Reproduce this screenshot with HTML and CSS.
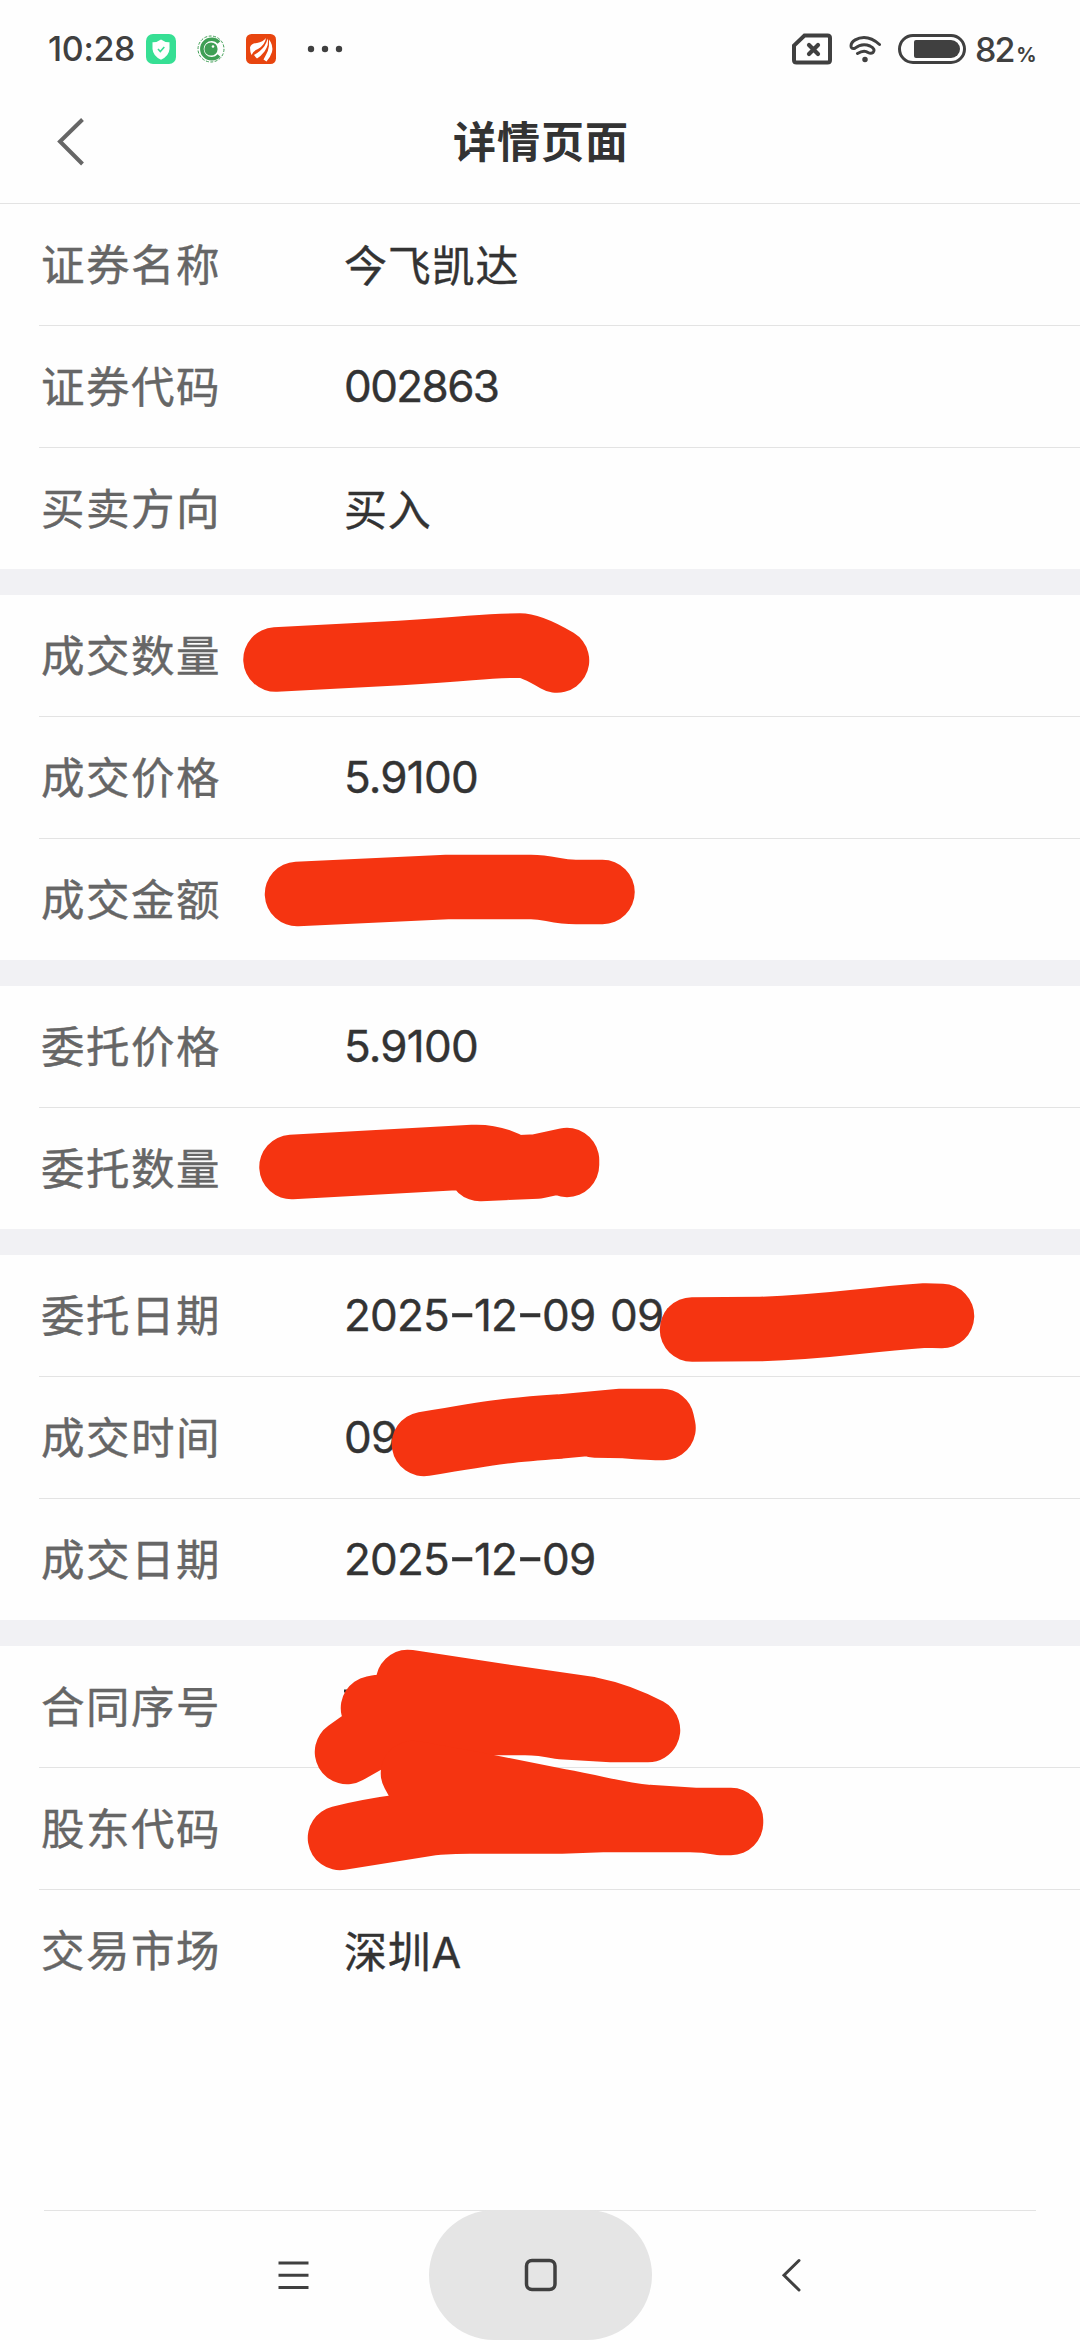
FILE: index.html
```html
<!DOCTYPE html>
<html lang="zh-CN">
<head>
<meta charset="utf-8">
<title>详情页面</title>
<link rel="stylesheet" href="styles.css">
</head>
<body>
<div class="screen">
  <header class="status">
    <span class="clock">10:28</span>
    <svg class="app shield" viewBox="0 0 30 30"><rect width="30" height="30" rx="7" fill="#36df94"/><path d="M15 5.500Q19 8.500 23.500 8.300V15Q23 22 15 25.700Q7 22 6.500 15V8.300Q11 8.500 15 5.500Z" fill="#fff"/><path d="M12 15l2.300 2.500 4-4.500" fill="none" stroke="#36df94" stroke-width="1.600"/></svg>
    <svg class="app ring" viewBox="0 0 28 28"><circle cx="14" cy="14" r="13" fill="none" stroke="#3f9f55" stroke-width="1" stroke-dasharray="3 1.500"/><path d="M22 7.500A9.800 9.800 0 1 0 22 20.500" fill="none" stroke="#3f9f55" stroke-width="3.600"/><circle cx="14" cy="14" r="6.600" fill="#3f9f55"/><circle cx="16" cy="11.500" r="1.300" fill="#fff"/></svg>
    <svg class="app wing" viewBox="0 0 30 30"><rect width="30" height="30" rx="5.500" fill="#e8450f"/><g fill="#fff"><path d="M4 13.500Q5 9.500 11 9Q17 8 20 4Q19 11 12 15Q7 17 5.500 21Q4 18 4 13.500Z"/><path d="M8 21Q15 17 18.500 12Q21 8 21.500 4.500Q23.500 10 18.500 17.500Q15 22 11 24.500Q9.500 23 8 21Z"/><path d="M17.500 25.500Q20 21 21.800 17Q23.500 12 23 5.500Q27.500 11 26 18Q24 24 20.500 27.500Z"/></g></svg>
    <svg class="more" viewBox="0 0 36 8" fill="#404040"><circle cx="4" cy="4" r="3.200"/><circle cx="18" cy="4" r="3.200"/><circle cx="32" cy="4" r="3.200"/></svg>
    <span class="spacer"></span>
    <svg class="sim" viewBox="0 0 40 32" fill="none" stroke="#404040"><path d="M12.500 2.500H35.500Q38 2.500 38 5V27Q38 29.500 35.500 29.500H4.500Q2 29.500 2 27V12.500Z" stroke-width="4"/><path d="M17 12l9 9m0-9l-9 9" stroke-width="4.200" stroke-linecap="round"/></svg>
    <svg class="wifi" viewBox="0 0 32 28" fill="none" stroke="#404040" stroke-width="3" stroke-linecap="round"><path d="M30.500 9.500C25 4.500 20 2.500 15 2.500C9 2.500 2 6 2 11Q2 14.500 6 13.200C10 10 15 8.500 21 11Q27 14 24 17.500Q22 19 19 17.500Q15 14.500 8.500 18.500"/><circle cx="16" cy="24.500" r="2" fill="#404040" stroke-width="1.500"/></svg>
    <div class="battery"><i></i></div>
    <span class="pct">82<small>%</small></span>
  </header>
  <div class="title">
    <svg class="back" viewBox="0 0 28 50"><path d="M25.500 2.500L3 24.500L25.500 47" fill="none" stroke="#666" stroke-width="4"/></svg>
    <h1>详情页面</h1>
  </div>
  <main>
    <section>
      <div class="row"><span class="label">证券名称</span><span class="value">今飞凯达</span></div>
      <div class="row"><span class="label">证券代码</span><span class="value num code">002863</span></div>
      <div class="row"><span class="label">买卖方向</span><span class="value">买入</span></div>
    </section>
    <section>
      <div class="row"><span class="label">成交数量</span></div>
      <div class="row"><span class="label">成交价格</span><span class="value num">5.9100</span></div>
      <div class="row"><span class="label">成交金额</span></div>
    </section>
    <section>
      <div class="row"><span class="label">委托价格</span><span class="value num">5.9100</span></div>
      <div class="row"><span class="label">委托数量</span></div>
    </section>
    <section>
      <div class="row"><span class="label">委托日期</span><span class="value num">2025<b>-</b>12<b>-</b>09 09:</span></div>
      <div class="row"><span class="label">成交时间</span><span class="value num">09</span></div>
      <div class="row"><span class="label">成交日期</span><span class="value num">2025<b>-</b>12<b>-</b>09</span></div>
    </section>
    <section>
      <div class="row"><span class="label">合同序号</span></div>
      <div class="row"><span class="label">股东代码</span></div>
      <div class="row"><span class="label">交易市场</span><span class="value">深圳A</span></div>
    </section>
  </main>
  <nav>
    <svg viewBox="0 0 223 130"><path d="M96.500 53h30m-30 12.300h30m-30 12.200h30" stroke="#404040" stroke-width="3"/></svg>
    <svg class="home" viewBox="0 0 223 130"><rect x="97.500" y="50.500" width="28.500" height="29" rx="5.500" fill="none" stroke="#404040" stroke-width="3.500"/></svg>
    <svg viewBox="0 0 223 130"><path d="M123 50.500L108 65.300L123 80" fill="none" stroke="#404040" stroke-width="3" stroke-linecap="round"/></svg>
  </nav>
  <svg class="marker" viewBox="0 0 1080 2340">
    <path class="tick" d="M344 1691h6"/>
    <path d="M275.500 659.500L400 653Q440 650.500 470 648Q500 645.500 520 645.500Q532 645.500 557 660.500"/>
    <path d="M297 894L447 887H531C550 887 555 892 576 892H602.500"/>
    <path d="M291.500 1167L473 1157Q495 1156 512 1167L480 1169L537 1166.500L567 1160V1165"/>
    <path d="M692 1329.500L760 1329C830 1327 850 1321 925 1315.500L942 1316"/>
    <path d="M424 1444C500 1431 510 1430 560 1426.500L619 1421H662L663.500 1428Q650 1428 625 1426L595 1425.500"/>
    <path class="solid" d="M408 1682L500 1696L590 1709Q620 1715 648 1730H612L561 1727Q540 1723 525 1723H440L400 1722L347 1752L385 1725L373 1708L378 1707H432Z"/>
    <path class="solid" d="M340 1838C380 1828 430 1821.500 470 1821.500H561L602 1820H690Q705 1820 720 1823H731V1820H694L648 1817C615 1814 600 1808 560 1801L474 1784L413 1773L440 1822Z"/>
  </svg>
</div>
</body>
</html>
```
FILE: styles.css
```css
* { box-sizing: border-box; }
body { margin: 0; background: #fefefe; font-family: Inter, "Noto Sans CJK SC", sans-serif; color: #333; }
.screen { position: relative; width: 1080px; height: 2340px; overflow: hidden; display: flex; flex-direction: column; }
svg { display: block; flex: none; }

.status { height: 80px; padding: 18px 46px 0 48px; display: flex; align-items: center; color: #404040; }
.clock { width: 98px; font-size: 34px; font-weight: 500; letter-spacing: -0.3px; line-height: 62px; white-space: nowrap; }
.app { width: 30px; height: 30px; }
.ring { width: 28px; height: 28px; margin-left: 21px; }
.wing { margin-left: 21px; }
.more { width: 36px; height: 8px; margin-left: 31px; }
.spacer { flex: 1; }
.sim { width: 40px; height: 32px; }
.wifi { width: 32px; height: 28px; margin-left: 17px; }
.battery { width: 68px; height: 30px; margin-left: 17px; border: 3px solid #404040; border-radius: 15px; padding: 3px 3px 3px 13px; }
.battery i { display: block; height: 18px; background: #404040; border-radius: 2px 9px 9px 2px; }
.pct { width: 59px; margin-left: 9px; font-size: 34px; font-weight: 500; letter-spacing: -2px; white-space: nowrap; }
.pct small { font-size: 20px; font-weight: 700; margin-left: 3px; }

.title { height: 124px; border-bottom: 1px solid #e3e3e3; display: grid; grid-template-columns: 1fr auto 1fr; align-items: center; }
.back { width: 28px; height: 50px; margin-left: 57px; }
h1 { margin: 0 0 0 2px; font-size: 43px; font-weight: 600; letter-spacing: 1px; line-height: 60px; }

section + section { border-top: 26px solid #f1f1f4; }
.row { height: 122px; margin-left: 39px; padding-bottom: 4px; display: flex; align-items: center; border-bottom: 1px solid #e3e3e3; -webkit-text-stroke: 0.4px; }
.row:last-child { height: 121px; border-bottom: 0; }
.label { width: 305px; padding-left: 2px; font-size: 43.5px; letter-spacing: 1.5px; color: #666; }
.value { font-size: 43px; letter-spacing: 0.8px; white-space: nowrap; }
.num { font-size: 44px; letter-spacing: -0.8px; word-spacing: 3px; padding-top: 2px; }
.code { letter-spacing: -1.6px; }
.num b { display: inline-block; font-weight: 400; margin: 0 2.500px 0 3px; transform: scaleX(1.4); font-feature-settings: "case"; }

nav { height: 130px; margin: auto 44px 0; border-top: 1px solid #e3e3e3; display: flex; justify-content: center; gap: 24px; }
nav svg { width: 223px; height: 130px; margin-top: -1px; }
.home { background: #e5e5e5; border-radius: 65px; }

.marker { position: absolute; left: 0; top: 0; width: 1080px; height: 2340px; fill: none; stroke: #f53411; stroke-width: 64.500px; stroke-linecap: round; stroke-linejoin: round; }
.marker .solid { fill: #f53411; }
.marker .tick { stroke: #333; stroke-width: 3px; stroke-linecap: butt; }
```
